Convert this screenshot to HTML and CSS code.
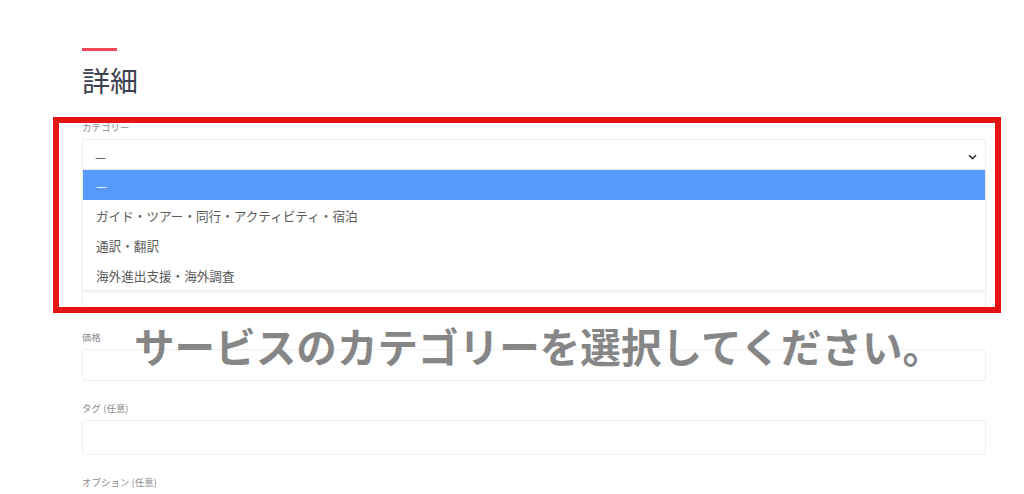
FILE: index.html
```html
<!DOCTYPE html>
<html lang="ja">
<head>
<meta charset="utf-8">
<title>詳細</title>
<link rel="stylesheet" href="styles.css">
</head>
<body>
<div class="page">
  <section class="detail">
    <div class="accent"></div>
    <h2 class="title">詳細</h2>

    <div class="field">
      <label class="label">カテゴリー</label>
      <div class="select">
        <span class="select-value">—</span>
        <svg class="chevron" width="9" height="6" viewBox="0 0 9 6"><path d="M1 1.2 L4.5 4.6 L8 1.2" fill="none" stroke="#333" stroke-width="1.6"/></svg>
        <ul class="dropdown">
          <li class="option active">—</li>
          <li class="option">ガイド・ツアー・同行・アクティビティ・宿泊</li>
          <li class="option">通訳・翻訳</li>
          <li class="option">海外進出支援・海外調査</li>
        </ul>
      </div>
    </div>

    <div class="field">
      <div class="label-spacer"></div>
      <div class="input textarea"></div>
    </div>

    <div class="field">
      <label class="label">価格</label>
      <div class="input price"></div>
    </div>

    <div class="field">
      <label class="label">タグ (任意)</label>
      <div class="input tags"></div>
    </div>

    <div class="field">
      <label class="label">オプション (任意)</label>
    </div>
  </section>

  <div class="annot-box"></div>
  <p class="annot-text">サービスのカテゴリーを選択してください。</p>
</div>
</body>
</html>
```

FILE: styles.css
```css
* { box-sizing: border-box; }
html, body {
  margin: 0;
  padding: 0;
  background: #ffffff;
  height: 494px;
  overflow: hidden;
}
body {
  font-family: "Noto Sans CJK JP", "Noto Sans", sans-serif;
  color: #555;
}
.page {
  position: relative;
  width: 1024px;
  height: 494px;
  overflow: hidden;
}
.detail {
  padding: 48px 0 0 82px;
  width: 986px;
}
.accent {
  width: 35px;
  height: 3px;
  background: #f2485a;
  margin-bottom: 9px;
}
.title {
  margin: 0 0 20px 0;
  font-size: 28px;
  line-height: 40px;
  font-weight: 400;
  color: #3b4150;
}
.field {
  display: flex;
  flex-direction: column;
  margin-bottom: 20px;
}
.label {
  font-size: 9.4px;
  line-height: 14px;
  color: #8a8a8a;
  margin-bottom: 5px;
  letter-spacing: 0.1px;
}
.label-spacer {
  height: 14px;
  margin-bottom: 5px;
}
.select {
  position: relative;
  height: 31px;
  border: 1px solid #efefef;
  border-radius: 2px;
  background: #fff;
  display: flex;
  align-items: center;
  padding: 3px 8px 0 12px;
}
.select-value {
  font-size: 12.5px;
  color: #444;
  flex: 1;
}
.chevron {
  margin-top: 2px;
}
.dropdown {
  position: absolute;
  top: 30px;
  left: -1px;
  right: -1px;
  margin: 0;
  padding: 0;
  list-style: none;
  background: #fff;
  border: 1px solid #ececec;
  border-top: none;
  box-shadow: 0 1px 3px rgba(0,0,0,0.06);
  z-index: 2;
}
.option {
  height: 30px;
  line-height: 32px;
  padding-left: 13px;
  font-size: 12.6px;
  color: #5a5a5a;
}
.option.active {
  background: #5899fc;
  color: #fff;
}
.input {
  height: 32px;
  border: 1px solid #efefef;
  border-radius: 3px;
  background: #fff;
}
.textarea { height: 101px; }
.tags { height: 35px; }

.annot-box {
  position: absolute;
  left: 53px;
  top: 117px;
  width: 948px;
  height: 196px;
  border: 6px solid #e31414;
  z-index: 3;
}
.annot-text {
  position: absolute;
  left: 134px;
  top: 326px;
  margin: 0;
  font-size: 40.6px;
  line-height: 1;
  font-weight: 700;
  color: #868686;
  white-space: nowrap;
  z-index: 4;
}
```
